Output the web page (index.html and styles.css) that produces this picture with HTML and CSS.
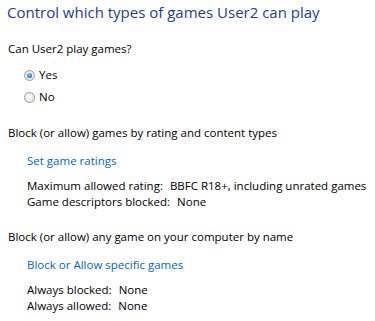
FILE: index.html
```html
<!DOCTYPE html>
<html lang="en">
<head>
  <meta charset="UTF-8" />
  <title>Game Controls</title>
  <link rel="stylesheet" href="styles.css">
</head>
<body>
  <div class="page">
    <h1 class="title">Control which types of games User2 can play</h1>

    <p class="question">Can User2 play games?</p>
    <div class="options">
      <label class="option"><span class="radio checked"></span>Yes</label>
      <label class="option"><span class="radio"></span>No</label>
    </div>

    <div class="section first">
      <p class="section-head">Block (or allow) games by rating and content types</p>
      <a class="link" href="#">Set game ratings</a>
      <div class="details">
        <div class="row"><span class="key">Maximum allowed rating:</span><span class="val">BBFC R18+, including unrated games</span></div>
        <div class="row"><span class="key">Game descriptors blocked:</span><span class="val">None</span></div>
      </div>
    </div>

    <div class="section">
      <p class="section-head">Block (or allow) any game on your computer by name</p>
      <a class="link" href="#">Block or Allow specific games</a>
      <div class="details">
        <div class="row"><span class="key">Always blocked:</span><span class="val">None</span></div>
        <div class="row"><span class="key">Always allowed:</span><span class="val">None</span></div>
      </div>
    </div>
  </div>
</body>
</html>
```

FILE: styles.css
```css
body {
  margin: 0;
  background: #fff;
  color: #000;
  font-family: 'Open Sans', 'Noto Sans', sans-serif;
  font-size: 11.5px;
  line-height: 16px;
}
.page {
  padding: 2px 0 0 7px;
}
p {
  margin: 0;
}
.title {
  margin: 0;
  font-size: 15px;
  font-weight: normal;
  line-height: 20px;
  color: #1e3c96;
}
.question {
  margin-top: 19px;
  padding-left: 1px;
}
.options {
  margin-top: 7px;
  padding-left: 17px;
}
.option {
  display: flex;
  align-items: center;
  height: 22px;
  line-height: 22px;
}
.radio {
  display: inline-block;
  box-sizing: border-box;
  width: 11px;
  height: 11px;
  margin-right: 4px;
  border: 1px solid #9a9a9a;
  border-radius: 50%;
  background: radial-gradient(circle at 50% 40%, #fbfbfb, #dcdcdc);
  position: relative;
}
.radio.checked::after {
  content: "";
  position: absolute;
  left: 2px;
  top: 2px;
  width: 5px;
  height: 5px;
  border-radius: 50%;
  background: radial-gradient(circle at 45% 35%, #8fd6ff, #1f7fcf 60%, #0b4f92);
}
.section {
  margin-top: 19px;
  padding-left: 1px;
}
.section.first {
  margin-top: 17px;
}
.link {
  display: block;
  margin: 12px 0 0 19px;
  color: #0066cc;
  text-decoration: none;
}
.details {
  margin: 9px 0 0 19px;
}
.key {
  margin-right: 7px;
}
```
